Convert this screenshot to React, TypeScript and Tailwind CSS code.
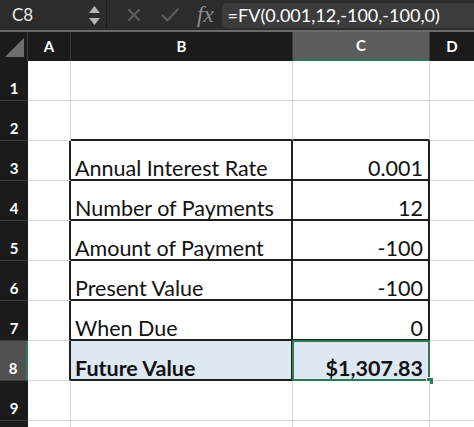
import React from 'react'

const font = { fontFamily: 'Lato, "Open Sans", sans-serif' }

type Cell = { text?: string; bold?: boolean }

const rows: { b?: Cell; c?: Cell }[] = [
  {},
  {},
  { b: { text: 'Annual Interest Rate' }, c: { text: '0.001' } },
  { b: { text: 'Number of Payments' }, c: { text: '12' } },
  { b: { text: 'Amount of Payment' }, c: { text: '-100' } },
  { b: { text: 'Present Value' }, c: { text: '-100' } },
  { b: { text: 'When Due' }, c: { text: '0' } },
  { b: { text: 'Future Value', bold: true }, c: { text: '$1,307.83', bold: true } },
  {},
  {},
]

function FormulaBar() {
  return (
    <div className="flex h-[30px] items-center bg-[#2c2c2c]">
      <div className="flex h-full w-[107px] items-center border-r border-[#1c1c1c] pl-[12px] pr-[6px]">
        <span className="flex-1 text-[17px] text-[#e8e8e8]" style={font}>C8</span>
        <div className="flex flex-col items-center gap-[5px]">
          <svg width="11" height="7" viewBox="0 0 11 7"><path d="M5.5 0 L11 7 L0 7 Z" fill="#b5b5b5" /></svg>
          <svg width="11" height="7" viewBox="0 0 11 7"><path d="M0 0 L11 0 L5.5 7 Z" fill="#b5b5b5" /></svg>
        </div>
      </div>
      <div className="flex h-full items-center pl-[20px]">
        <svg width="14" height="14" viewBox="0 0 14 14" className="mr-[20px]">
          <path d="M2 2 L12 12 M12 2 L2 12" stroke="#5b5b5b" strokeWidth="2.4" strokeLinecap="round" />
        </svg>
        <svg width="18" height="14" viewBox="0 0 18 14" className="mr-[18px]">
          <path d="M1.5 7.5 L6.5 12.5 L16.5 1.5" stroke="#5b5b5b" strokeWidth="2.4" fill="none" strokeLinecap="round" strokeLinejoin="round" />
        </svg>
        <span className="text-[23px] italic text-[#8c8c8c]" style={{ fontFamily: '"Liberation Serif", serif' }}>fx</span>
      </div>
      <div className="ml-[8px] flex h-[25px] flex-1 items-center rounded-l-[5px] bg-[#3c3c3c] pl-[6px]">
        <span className="text-[18px] text-white" style={font}>=FV(0.001,12,-100,-100,0)</span>
      </div>
    </div>
  )
}

function HeaderRow() {
  const hd = 'flex items-center justify-center border-r border-[#3a3a3a] text-[15px] font-bold text-white'
  return (
    <div className="flex h-[29px] bg-[#1b1b1b]" style={font}>
      <div className="flex w-[28px] items-end justify-end border-r border-[#3a3a3a] pb-[4px] pr-[3px]">
        <svg width="19" height="19" viewBox="0 0 19 19"><path d="M19 0 L19 19 L0 19 Z" fill="#6e6e6e" /></svg>
      </div>
      <div className={`${hd} w-[43px]`}>A</div>
      <div className={`${hd} w-[222px]`}>B</div>
      <div className={`${hd} w-[137px] border-b-2 border-b-[#2e7a52] bg-[#5c5c5c]`}>C</div>
      <div className={`${hd} w-[44px] border-r-0`}>D</div>
    </div>
  )
}

export default function App() {
  return (
    <div className="h-[427px] w-[474px] overflow-hidden bg-white">
      <FormulaBar />
      <div className="h-[2px] bg-[#6a6a6a]" />
      <HeaderRow />
      {rows.map((r, i) => {
        const n = i + 1
        const inTable = n >= 3 && n <= 8
        const sel = n === 8
        const rowBg = sel ? 'bg-[#dde8f3]' : 'bg-white'
        const aBorder = inTable ? 'border-r-2 border-r-[#1f1f1f]' : 'border-r border-r-[#d6d6d6]'
        const tBorderB = inTable || n === 2 ? 'border-b-2 border-b-[#1f1f1f]' : 'border-b border-b-[#d6d6d6]'
        const tBorderR = inTable ? 'border-r-2 border-r-[#1f1f1f]' : 'border-r border-r-[#d6d6d6]'
        const cellText = (c?: Cell) => (c?.bold ? 'font-bold text-[#111]' : 'text-[#111]')
        return (
          <div key={n} className="flex h-[40px]" style={font}>
            <div
              className={`flex w-[28px] items-end justify-center border-b border-b-[#3a3a3a] pb-[1px] text-[15px] font-bold text-white ${sel ? 'border-r-2 border-r-[#2e7a52] bg-[#505050]' : 'bg-[#1b1b1b]'}`}
            >
              {n < 10 ? n : ''}
            </div>
            <div className={`w-[43px] border-b border-b-[#d6d6d6] ${aBorder}`} />
            <div
              className={`flex w-[222px] items-end pl-[4px] text-[21.5px] leading-[22px] ${rowBg} ${tBorderB} ${tBorderR} ${cellText(r.b)}`}
            >
              {r.b?.text}
            </div>
            <div
              className={`relative flex w-[137px] items-end justify-end pr-[5px] text-[21.5px] leading-[22px] ${rowBg} ${tBorderB} ${tBorderR} ${cellText(r.c)}`}
            >
              {r.c?.text}
              {sel && (
                <>
                  <div className="absolute -bottom-[2px] -left-[1px] -right-[2px] -top-[1px] border-2 border-[#2e7a52]" />
                  <div className="absolute -bottom-[6px] -right-[6px] h-[8px] w-[8px] border border-white bg-[#2e7a52]" />
                </>
              )}
            </div>
            <div className="w-[44px] border-b border-b-[#d6d6d6]" />
          </div>
        )
      })}
    </div>
  )
}
